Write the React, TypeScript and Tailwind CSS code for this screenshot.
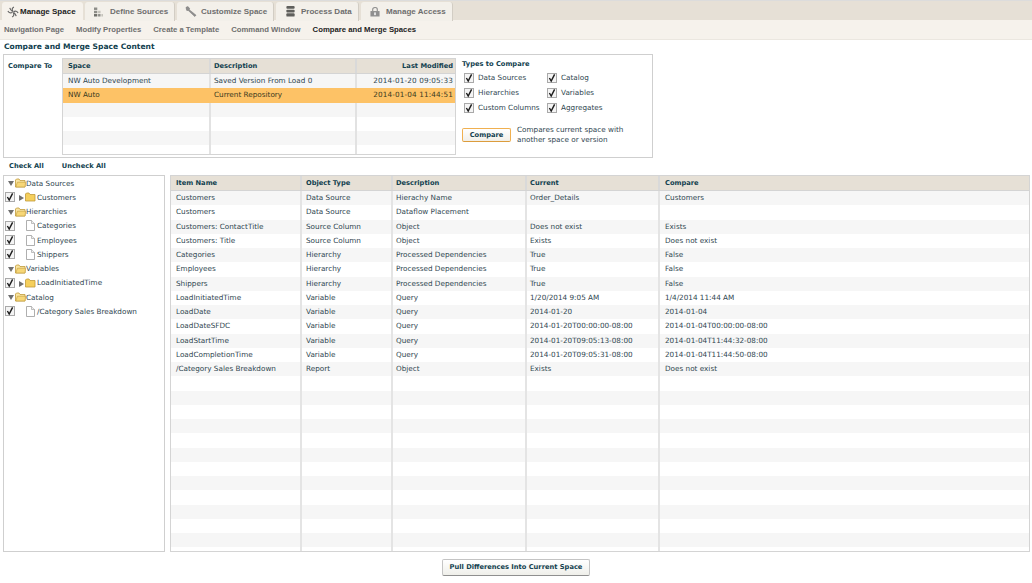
import { ReactNode } from 'react';

const dejavu = 'font-["DejaVu_Sans",sans-serif]';

function Check() {
  return (
    <svg width="10" height="10" viewBox="0 0 10 10" className="shrink-0 -translate-y-px">
      <rect x="0.5" y="0.5" width="9" height="9" fill="#f4f4f4" stroke="#a9a9a9" />
      <path d="M2.4 5 L4.2 8 L7.6 1.4" fill="none" stroke="#1a1a1a" strokeWidth="1.4" />
    </svg>
  );
}

function Folder({ open = false }: { open?: boolean }) {
  return (
    <svg width="11" height="10" viewBox="0 0 11 10" className="shrink-0 -translate-y-px">
      <path d="M0.5 2 L0.5 9 L10 9 L10 2.5 L5 2.5 L4 1 L1.5 1 Z" fill={open ? '#fbe6a2' : '#f5cf5c'} stroke="#c09a3a" strokeWidth="0.8" />
      {open ? <path d="M0.8 9 L2.4 4.2 L10.6 4.2 L10 9 Z" fill="#f7d777" stroke="#c09a3a" strokeWidth="0.6" /> : null}
    </svg>
  );
}

function FileIcon() {
  return (
    <svg width="9" height="11" viewBox="0 0 9 11" className="shrink-0 -translate-y-px">
      <path d="M0.5 0.5 L5.5 0.5 L8.5 3.5 L8.5 10.5 L0.5 10.5 Z" fill="#fff" stroke="#9a9a9a" strokeWidth="0.8" />
      <path d="M5.5 0.5 L5.5 3.5 L8.5 3.5" fill="#eee" stroke="#9a9a9a" strokeWidth="0.6" />
    </svg>
  );
}

function Arrow({ down = false }: { down?: boolean }) {
  return (
    <svg width="6" height="6" viewBox="0 0 6 6" className="shrink-0">
      <path d={down ? 'M0 0 L6 0 L3 5 Z' : 'M1 0 L6 3 L1 6 Z'} fill="#6f6f6f" />
    </svg>
  );
}

const tabIcons: Record<string, ReactNode> = {
  'Manage Space': (
    <svg width="12" height="12" viewBox="0 0 13 13">
      <g fill="none" stroke="#666" strokeWidth="1.3">
        <path d="M6.5 6 C5 4 5.5 2 7.5 1" />
        <path d="M7 6.3 C9 5 11 5.5 12 7.5" />
        <path d="M6.8 7 C8 9 7.5 11 5.5 12" />
        <path d="M6 6.8 C4 8 2 7.5 1 5.5" />
        <path d="M6 6 C4.5 5 3.5 3.5 3 2" />
        <path d="M7.2 7 C8.5 8 9.5 9.5 10 11" />
      </g>
    </svg>
  ),
  'Define Sources': (
    <svg width="9" height="10" viewBox="0 0 11 11" fill="#8d8d88">
      <rect x="0" y="0" width="4" height="3" />
      <rect x="0" y="4" width="4" height="3" />
      <rect x="0" y="8" width="4" height="3" fill="#6f6f6a" />
      <rect x="5" y="4" width="3" height="3" fill="#c4c2ba" />
      <rect x="5" y="8" width="3" height="3" />
      <rect x="9" y="8" width="2" height="3" fill="#c4c2ba" />
    </svg>
  ),
  'Customize Space': (
    <svg width="12" height="11" viewBox="0 0 13 12">
      <path d="M1 1.5 L3 0.5 L5 2.5 L4.6 4 L12 10 L10.6 11.5 L3.6 5 L1.8 4.8 Z" fill="#8e8e8e" stroke="#6c6c6c" strokeWidth="0.5" />
    </svg>
  ),
  'Process Data': (
    <svg width="9" height="11" viewBox="0 0 9 12" fill="#5f5f5c">
      <rect x="0" y="0" width="9" height="3" rx="1" />
      <rect x="0" y="4" width="9" height="3" rx="1" />
      <rect x="0" y="8" width="9" height="3.5" rx="1" />
    </svg>
  ),
  'Manage Access': (
    <svg width="10" height="11" viewBox="0 0 11 11">
      <path d="M3 5 L3 3 C3 0.5 8 0.5 8 3 L8 5" fill="none" stroke="#8a8a8a" strokeWidth="1.2" />
      <rect x="0.5" y="5" width="10" height="6" fill="#8f8f8f" />
      <rect x="4.5" y="6.5" width="2" height="3" fill="#e8e8e8" />
    </svg>
  ),
};

const tabs = [
  { label: 'Manage Space', box: 'w-[81px] pl-[5px] gap-[1px]' },
  { label: 'Define Sources', box: 'w-[90px] pl-[9px] gap-[7px]' },
  { label: 'Customize Space', box: 'w-[97px] pl-[8px] gap-[4px]' },
  { label: 'Process Data', box: 'w-[83px] pl-[10px] gap-[6px]' },
  { label: 'Manage Access', box: 'w-[92px] pl-[9px] gap-[6px]' },
];

const subNav = ['Navigation Page', 'Modify Properties', 'Create a Template', 'Command Window', 'Compare and Merge Spaces'];

const spaces = [
  ['NW Auto Development', 'Saved Version From Load 0', '2014-01-20 09:05:33'],
  ['NW Auto', 'Current Repository', '2014-01-04 11:44:51'],
  ['', '', ''],
  ['', '', ''],
  ['', '', ''],
  ['', '', ''],
];

const tree = [
  { kind: 'group', label: 'Data Sources' },
  { kind: 'folder', label: 'Customers' },
  { kind: 'group', label: 'Hierarchies' },
  { kind: 'file', label: 'Categories' },
  { kind: 'file', label: 'Employees' },
  { kind: 'file', label: 'Shippers' },
  { kind: 'group', label: 'Variables' },
  { kind: 'folder', label: 'LoadInitiatedTime' },
  { kind: 'group', label: 'Catalog' },
  { kind: 'file', label: '/Category Sales Breakdown' },
];

const diffs = [
  ['Customers', 'Data Source', 'Hierachy Name', 'Order_Details', 'Customers'],
  ['Customers', 'Data Source', 'Dataflow Placement', '', ''],
  ['Customers: ContactTitle', 'Source Column', 'Object', 'Does not exist', 'Exists'],
  ['Customers: Title', 'Source Column', 'Object', 'Exists', 'Does not exist'],
  ['Categories', 'Hierarchy', 'Processed Dependencies', 'True', 'False'],
  ['Employees', 'Hierarchy', 'Processed Dependencies', 'True', 'False'],
  ['Shippers', 'Hierarchy', 'Processed Dependencies', 'True', 'False'],
  ['LoadInitiatedTime', 'Variable', 'Query', '1/20/2014 9:05 AM', '1/4/2014 11:44 AM'],
  ['LoadDate', 'Variable', 'Query', '2014-01-20', '2014-01-04'],
  ['LoadDateSFDC', 'Variable', 'Query', '2014-01-20T00:00:00-08:00', '2014-01-04T00:00:00-08:00'],
  ['LoadStartTime', 'Variable', 'Query', '2014-01-20T09:05:13-08:00', '2014-01-04T11:44:32-08:00'],
  ['LoadCompletionTime', 'Variable', 'Query', '2014-01-20T09:05:31-08:00', '2014-01-04T11:44:50-08:00'],
  ['/Category Sales Breakdown', 'Report', 'Object', 'Exists', 'Does not exist'],
];

const diffRows = [...diffs, ...Array.from({ length: 13 }, () => ['', '', '', '', ''])];
const diffCols = 'grid grid-cols-[131px_91px_134px_133px_1fr]';
const diffPad = ['pl-[5px]', 'pl-[4px]', 'pl-[3px]', 'pl-[3px]', 'pl-[5px]'];
const spaceCols = 'grid grid-cols-[148px_146px_1fr]';

const types = [
  ['Data Sources', 'Catalog'],
  ['Hierarchies', 'Variables'],
  ['Custom Columns', 'Aggregates'],
];

export default function App() {
  return (
    <div className={`w-[1032px] h-[583px] overflow-hidden whitespace-nowrap bg-white text-[7.25px] text-[#2f4650] ${dejavu}`}>
      {/* Tabs */}
      <div className="h-[20px] pt-[1px] pl-[2px] flex gap-[2px] items-start bg-[#e6e0d6] border-t border-[#dcdcdc]">
        {tabs.map((t, i) => (
          <div
            key={t.label}
            className={`${t.box} h-[19px] flex items-center rounded-t-[3px] font-["Liberation_Sans",sans-serif] font-bold text-[8px] ${
              i === 0 ? 'bg-[#f6f2ec] text-[#222]' : 'bg-[#f3f0ea] text-[#6e6e6e] border-r border-[#d2cdc4]'
            }`}
          >
            {tabIcons[t.label]}
            <span>{t.label}</span>
          </div>
        ))}
      </div>
      <div className='h-[20px] pl-[4px] flex items-center gap-[12px] bg-[#f6f2ec] border-b border-[#ebe7e0] font-["Liberation_Sans",sans-serif] font-bold text-[7.73px] text-[#6f6f6f]'>
        {subNav.map((s, i) => (
          <span key={s} className={i === 4 ? 'text-[#222]' : ''}>{s}</span>
        ))}
      </div>

      <h1 className="ml-[4px] h-[13px] leading-[13px] font-bold text-[7.55px] text-[#123f4f]">Compare and Merge Space Content</h1>

      {/* Compare panel */}
      <div className="mt-[1px] ml-[3px] w-[650px] h-[104px] border border-[#cfcfcf] flex pt-[3px]">
        <div className="w-[58px] pl-[4px] pt-[3px] font-bold text-[#123f4f] text-[6.7px]">Compare To</div>
        <div className="w-[394px] h-[97px] border border-[#d4d4d4] overflow-hidden">
          <div className={`${spaceCols} h-[15px] bg-[#e6e0d6] border-b border-[#d4d4d4] font-bold text-[#123f4f] text-[6.7px] leading-[14px]`}>
            <div className="pl-[5px] border-r-2 border-[#d9d9d9]">Space</div>
            <div className="pl-[3px] border-r-2 border-[#d9d9d9]">Description</div>
            <div className="pr-[2px] text-right">Last Modified</div>
          </div>
          {spaces.map((r, i) => (
            <div
              key={i}
              className={`${spaceCols} h-[14.25px] leading-[14px] ${i === 1 ? 'bg-[#fdc266] text-[#3a3a20]' : i % 2 === 0 ? 'bg-[#f6f6f6]' : 'bg-white'}`}
            >
              <div className={`pl-[5px] ${i === 1 ? '' : 'border-r-2 border-[#e2e2e2]'}`}>{r[0]}</div>
              <div className={`pl-[3px] ${i === 1 ? '' : 'border-r-2 border-[#e2e2e2]'}`}>{r[1]}</div>
              <div className="pr-[2px] text-right tracking-[0.15px]">{r[2]}</div>
            </div>
          ))}
        </div>
        <div className="pl-[6px]">
          <div className="font-bold text-[#123f4f] text-[6.7px] leading-[10px] mt-[1px]">Types to Compare</div>
          <div className="mt-[4px] flex flex-col gap-[4px] pl-[2px]">
            {types.map(([a, b]) => (
              <div key={a} className="grid grid-cols-[83px_1fr] h-[11px] items-center">
                <div className="flex items-center gap-[4px]"><Check />{a}</div>
                <div className="flex items-center gap-[4px]"><Check />{b}</div>
              </div>
            ))}
          </div>
          <div className="mt-[11px] flex items-center gap-[6px]">
            <button className="w-[49px] h-[14px] rounded-[2px] border border-[#f0b050] border-b-[#dc9c3c] bg-linear-to-b from-white to-[#f1efe9] font-bold text-[#123f4f] text-[6.7px]">Compare</button>
            <div className="leading-[10px]">Compares current space with<br />another space or version</div>
          </div>
        </div>
      </div>

      <div className="h-[17px] pl-[6px] flex items-center gap-[18px] font-bold text-[#123f4f] text-[6.7px] ml-[3px]">
        <span>Check All</span>
        <span>Uncheck All</span>
      </div>

      {/* Tree and results */}
      <div className="ml-[3px] flex gap-[5px]">
        <div className="w-[162px] h-[377px] border border-[#cfcfcf] pt-[1px]">
          {tree.map((t) => (
            <div key={t.label} className="h-[14.25px] flex items-center">
              {t.kind === 'group' ? (
                <div className="flex items-center pl-[4px]">
                  <span className="mr-[1px]"><Arrow down /></span>
                  <Folder open />
                  {t.label}
                </div>
              ) : (
                <div className="flex items-center pl-[1px]">
                  <Check />
                  {t.kind === 'folder' ? (
                    <div className="flex items-center pl-[3px]">
                      <span className="mr-[1px]"><Arrow /></span>
                      <Folder />
                      <span className="pl-[1px]">{t.label}</span>
                    </div>
                  ) : (
                    <div className="flex items-center pl-[11px] gap-[2px]"><FileIcon />{t.label}</div>
                  )}
                </div>
              )}
            </div>
          ))}
        </div>

        <div className="w-[860px] h-[377px] border border-[#d4d4d4] overflow-hidden">
          <div className={`${diffCols} h-[15px] bg-[#e6e0d6] border-b border-[#d4d4d4] font-bold text-[#123f4f] text-[6.7px] leading-[14px]`}>
            {['Item Name', 'Object Type', 'Description', 'Current', 'Compare'].map((h, i) => (
              <div key={h} className={`${diffPad[i]} ${i < 4 ? 'border-r-2 border-[#d9d9d9]' : ''}`}>{h}</div>
            ))}
          </div>
          {diffRows.map((r, i) => (
            <div key={i} className={`${diffCols} h-[14.25px] leading-[14px] ${i % 2 === 0 ? 'bg-[#f6f6f6]' : 'bg-white'}`}>
              {r.map((c, j) => (
                <div key={j} className={`${diffPad[j]} ${j < 4 ? 'border-r-2 border-[#e4e4e4]' : ''}`}>{c}</div>
              ))}
            </div>
          ))}
        </div>
      </div>

      <div className="mt-[7px] flex justify-center">
        <button className="w-[148px] h-[17px] rounded-[2px] border border-[#c4c4c4] border-b-[#8f8f8f] bg-linear-to-b from-white to-[#efefea] font-bold text-[#123f4f] text-[6.7px]">
          Pull Differences Into Current Space
        </button>
      </div>
    </div>
  );
}
